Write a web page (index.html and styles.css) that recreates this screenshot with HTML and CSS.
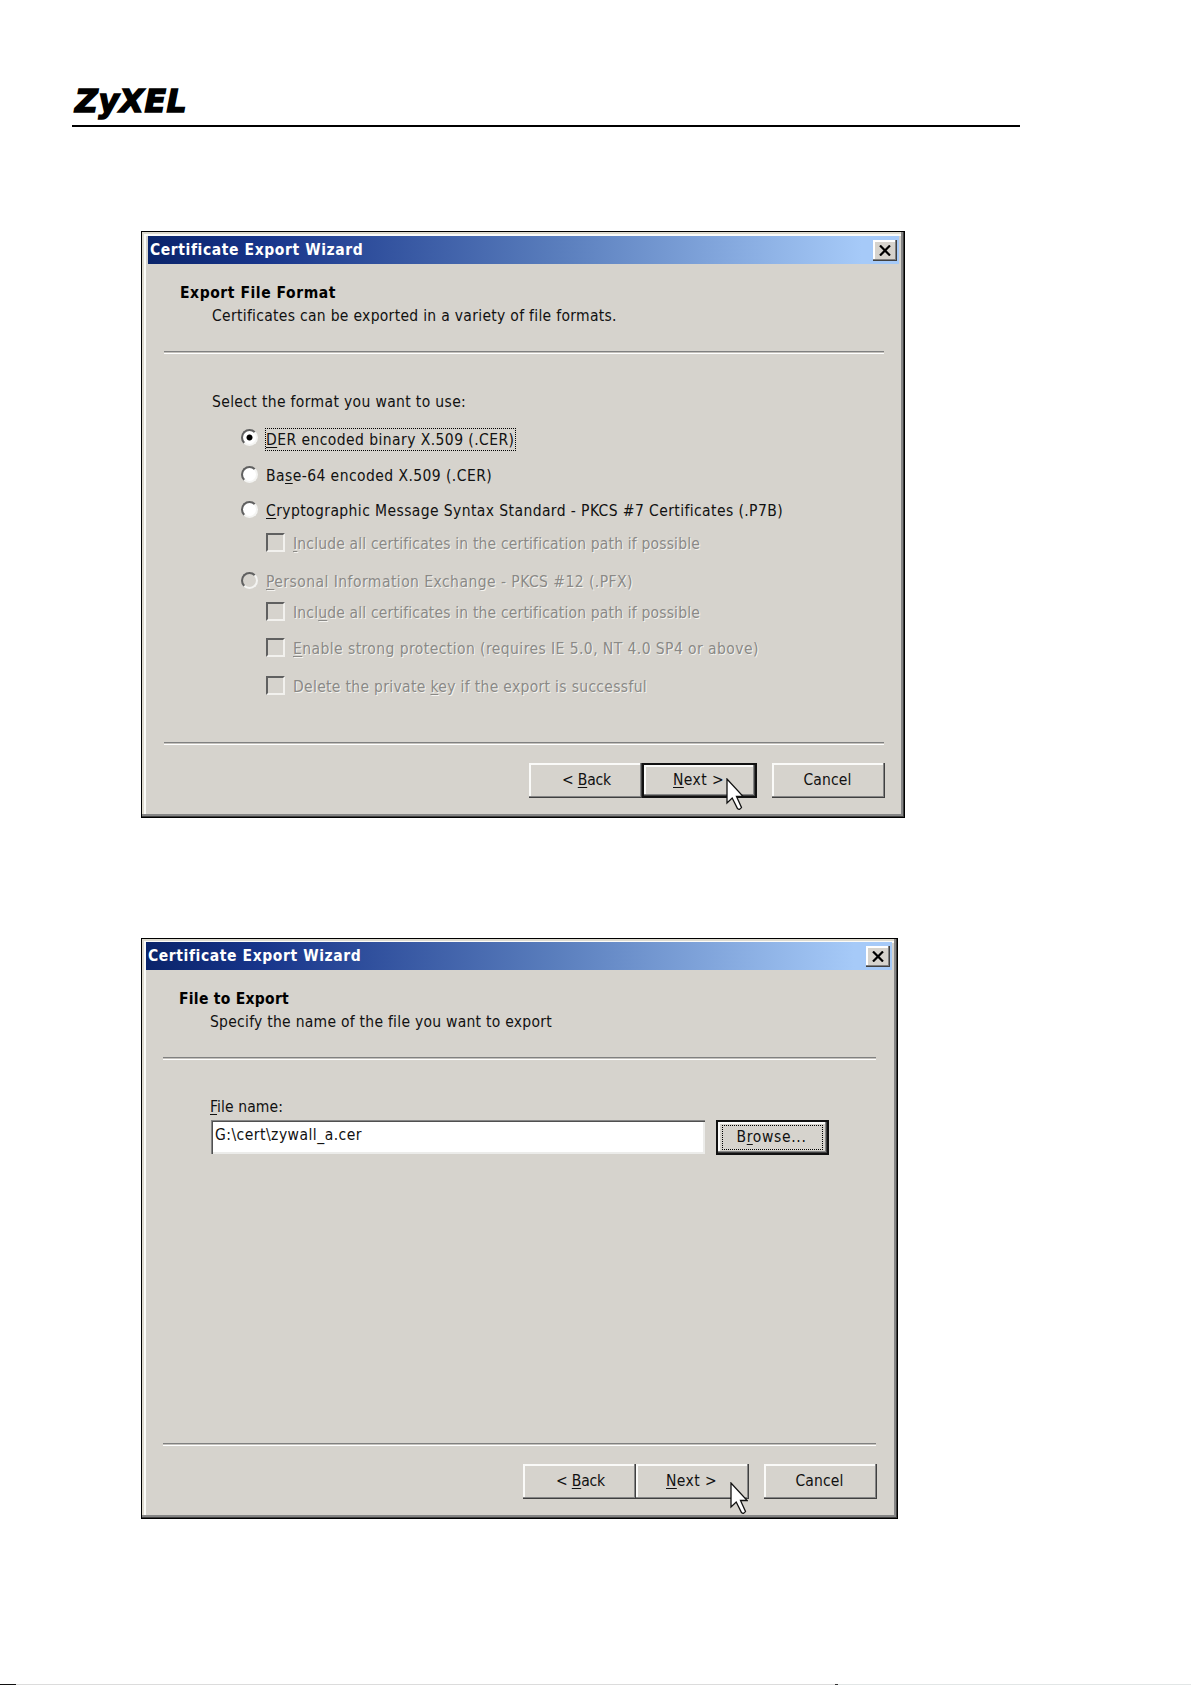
FILE: index.html
```
<!DOCTYPE html>
<html lang="en">
<head>
  <meta charset="UTF-8">
  <title>ZyXEL - Certificate Export</title>
  <link rel="stylesheet" href="styles.css">
</head>
<body>

  <header class="page-header">
    <div class="logo">ZyXEL</div>
  </header>

  <!-- Export File Format -->
  <div class="dialog dialog-format">
    <div class="title-bar">
      <span class="title">Certificate Export Wizard</span>
      <div class="close"><svg width="12" height="11" viewBox="0 0 12 11"><path d="M1 0.5L11 10.5M11 0.5L1 10.5" stroke="#000" stroke-width="2.2"/></svg></div>
    </div>
    <div class="heading">Export File Format</div>
    <div class="subheading">Certificates can be exported in a variety of file formats.</div>
    <div class="line"></div>
    <div class="prompt">Select the format you want to use:</div>

    <div class="option der">
      <i class="radio checked"></i>
      <label class="focus"><u>D</u>ER encoded binary X.509 (.CER)</label>
    </div>
    <div class="option base64">
      <i class="radio"></i>
      <label>Ba<u>s</u>e-64 encoded X.509 (.CER)</label>
    </div>
    <div class="option pkcs7">
      <i class="radio"></i>
      <label><u>C</u>ryptographic Message Syntax Standard - PKCS #7 Certificates (.P7B)</label>
    </div>
    <div class="option sub path disabled">
      <i class="checkbox"></i>
      <label><u>I</u>nclude all certificates in the certification path if possible</label>
    </div>
    <div class="option pkcs12 disabled">
      <i class="radio off"></i>
      <label><u>P</u>ersonal Information Exchange - PKCS #12 (.PFX)</label>
    </div>
    <div class="option sub path include disabled">
      <i class="checkbox"></i>
      <label>Incl<u>u</u>de all certificates in the certification path if possible</label>
    </div>
    <div class="option sub strong disabled">
      <i class="checkbox"></i>
      <label><u>E</u>nable strong protection (requires IE 5.0, NT 4.0 SP4 or above)</label>
    </div>
    <div class="option sub delete disabled">
      <i class="checkbox"></i>
      <label>Delete the private <u>k</u>ey if the export is successful</label>
    </div>

    <div class="line line-bottom"></div>
    <div class="buttons">
      <div class="button back"><span>&lt; <u>B</u>ack</span></div>
      <div class="button default"><span><u>N</u>ext &gt;</span></div>
      <div class="button cancel"><span>Cancel</span></div>
    </div>
    <svg class="cursor" width="18" height="33" viewBox="0 0 18 33"><path d="M1 1V25L6.2 20L11.5 30.5Q13.5 32.5 15.5 29.5L10.5 18.5H17.2Z" fill="#fff" stroke="#111" stroke-width="1.3"/></svg>
  </div>

  <!-- File to Export -->
  <div class="dialog dialog-file">
    <div class="title-bar">
      <span class="title">Certificate Export Wizard</span>
      <div class="close"><svg width="12" height="11" viewBox="0 0 12 11"><path d="M1 0.5L11 10.5M11 0.5L1 10.5" stroke="#000" stroke-width="2.2"/></svg></div>
    </div>
    <div class="heading">File to Export</div>
    <div class="subheading">Specify the name of the file you want to export</div>
    <div class="line"></div>
    <div class="prompt"><u>F</u>ile name:</div>
    <div class="file-row">
      <div class="input">G:\cert\zywall_a.cer</div>
      <div class="button default browse"><div class="focus-ring"><span>B<u>r</u>owse...</span></div></div>
    </div>
    <div class="line line-bottom"></div>
    <div class="buttons">
      <div class="button back"><span>&lt; <u>B</u>ack</span></div>
      <div class="button"><span><u>N</u>ext &gt;</span></div>
      <div class="button cancel"><span>Cancel</span></div>
    </div>
    <svg class="cursor" width="18" height="33" viewBox="0 0 18 33"><path d="M1 1V25L6.2 20L11.5 30.5Q13.5 32.5 15.5 29.5L10.5 18.5H17.2Z" fill="#fff" stroke="#111" stroke-width="1.3"/></svg>
  </div>

  <footer class="page-edge"></footer>

</body>
</html>
```
FILE: styles.css
```
* {
  box-sizing: border-box;
}

body {
  margin: 0;
  height: 1685px;
  display: flex;
  flex-direction: column;
  background: #fff;
  color: #111;
  font-family: "DejaVu Sans Condensed", "DejaVu Sans", sans-serif;
  font-stretch: condensed;
  font-size: 15.5px;
  line-height: 20px;
  white-space: nowrap;
  overflow: hidden;
}

u {
  text-decoration: underline;
  text-decoration-thickness: 1px;
  text-underline-offset: 2px;
}

.page-header {
  width: 948px;
  height: 127px;
  margin-left: 72px;
  padding: 80px 0 0 3px;
  border-bottom: 2px solid #000;
}

.logo {
  font-family: "DejaVu Sans", sans-serif;
  font-stretch: normal;
  font-weight: bold;
  font-style: italic;
  font-size: 31.5px;
  line-height: 42px;
  letter-spacing: 0.6px;
  color: #000;
  -webkit-text-stroke: 1.5px #000;
}

/* Dialog window */
.dialog {
  position: relative;
  margin-left: 141px;
  border: 1px solid #000;
  background: #d6d3cd;
  box-shadow: inset -1px -1px #404040, inset -3px -3px #858585, inset 2px 2px #dedbd0, inset 4px 4px #fbfbf8;
}

.dialog-format {
  width: 764px;
  height: 587px;
  margin-top: 104px;
  padding: 4px 5px 0 6px;
}

.dialog-file {
  width: 757px;
  height: 581px;
  margin-top: 120px;
  padding: 3px 5px 0 4px;
}

.title-bar {
  height: 28px;
  display: flex;
  justify-content: space-between;
  align-items: center;
  padding: 0 2px;
  background: linear-gradient(to right, #0a246a, #17348a 15%, #5a7ebd 55%, #a6caf8 95%);
}

.title {
  color: #fff;
  font-weight: bold;
  letter-spacing: 0.59px;
}

.close {
  width: 24px;
  height: 21px;
  display: flex;
  justify-content: center;
  align-items: center;
  background: #d6d3cd;
  box-shadow: inset -1px -1px #404040, inset -2px -2px #808080, inset 2px 2px #fff;
}

.heading {
  margin: 19px 0 0 32px;
  color: #000;
  font-weight: bold;
  letter-spacing: 0.56px;
}

.subheading {
  margin: 3px 0 0 64px;
  letter-spacing: 0.3px;
}

.line {
  height: 3px;
  margin: 25px 15px 0 16px;
  border-top: 1px solid #808080;
  border-bottom: 1px solid #fff;
  background: #c4c1bc;
}

.prompt {
  margin: 38px 0 15px 64px;
  letter-spacing: 0.35px;
}

/* Format choices */
.option {
  display: flex;
  align-items: center;
  height: 24px;
  margin-left: 93px;
  line-height: 24px;
  letter-spacing: 0.43px;
}

.option.sub {
  margin-left: 118px;
}

.radio {
  width: 17px;
  height: 17px;
  margin: 0 8px 4px 0;
  border-radius: 50%;
  border: 2px solid;
  border-color: #606060 #f4f4f2 #f4f4f2 #606060;
  background: #fff;
}

.radio.checked {
  background: radial-gradient(circle, #000 2.6px, #fff 3.4px);
}

.radio.off {
  background: #d6d3cd;
}

.checkbox {
  width: 19px;
  height: 19px;
  margin: 0 8px 3px 0;
  border: 2px solid;
  border-color: #606060 #f2f1ee #f2f1ee #606060;
}

.focus {
  width: 251px;
  height: 23px;
  margin-left: -1px;
  padding-left: 1px;
  outline: 1px dotted #000;
  outline-offset: -1px;
}

.disabled {
  color: #8a8986;
  text-shadow: 1px 1px #f4f3f0;
}

.base64 {
  margin-top: 13px;
}

.pkcs7 {
  margin-top: 11px;
  margin-bottom: 9px;
  letter-spacing: 0.405px;
}

.path {
  letter-spacing: 0.172px;
}

.pkcs12 {
  margin-top: 14px;
  letter-spacing: 0.454px;
}

.include {
  margin-top: 7px;
}

.strong {
  margin-top: 12px;
}

.delete {
  margin-top: 14px;
  letter-spacing: 0.322px;
}

.dialog-format .line-bottom {
  margin-top: 43px;
}

/* Buttons */
.buttons {
  display: flex;
  justify-content: flex-end;
  margin: 18px 14px 0 0;
}

.button {
  width: 113px;
  height: 35px;
  display: flex;
  justify-content: center;
  align-items: center;
  padding: 0 2px 1px 0;
  background: #d6d3cd;
  letter-spacing: 0.4px;
  box-shadow: inset -1px -1px #404040, inset -2px -2px #858585, inset 2px 2px #fafaf8;
}

.button.default {
  width: 115px;
  border: 2px solid #111;
}

.button.back {
  padding: 0 0 1px 2px;
  letter-spacing: -0.16px;
}

.button.cancel {
  margin-left: 15px;
  letter-spacing: 0.12px;
}

.cursor {
  position: absolute;
  left: 584px;
  top: 546px;
}

/* File dialog */
.dialog-file .heading {
  margin-left: 33px;
  letter-spacing: 0.28px;
}

.dialog-file .subheading {
  letter-spacing: 0.264px;
}

.dialog-file .line {
  margin-right: 16px;
  margin-left: 17px;
}

.dialog-file .prompt {
  margin: 37px 0 3px 64px;
  letter-spacing: 0.11px;
}

.file-row {
  display: flex;
  margin-left: 65px;
}

.input {
  width: 494px;
  height: 34px;
  margin-right: 11px;
  padding: 5px 0 0 4px;
  background: #fff;
  letter-spacing: 0.47px;
  box-shadow: inset 1px 1px #858585, inset 2px 2px #505050, inset -2px -2px #ececea;
}

.button.browse {
  width: 113px;
  padding: 0;
  letter-spacing: 0.66px;
}

.focus-ring {
  width: 101px;
  height: 25px;
  display: flex;
  justify-content: center;
  align-items: center;
  padding: 0 2px 2px 0;
  outline: 1px dotted #000;
  outline-offset: -1px;
}

.dialog-file .line-bottom {
  margin-top: 288px;
}

.dialog-file .buttons {
  margin: 18px 15px 0 0;
}

.dialog-file .cursor {
  left: 588px;
  top: 543px;
}

.page-edge {
  height: 1px;
  margin-top: auto;
  background: linear-gradient(to right, #111 16px, #dcdcdc 16px, #dcdcdc 835px, #333 835px, #333 838px, #e2e6e6 838px);
}
```
